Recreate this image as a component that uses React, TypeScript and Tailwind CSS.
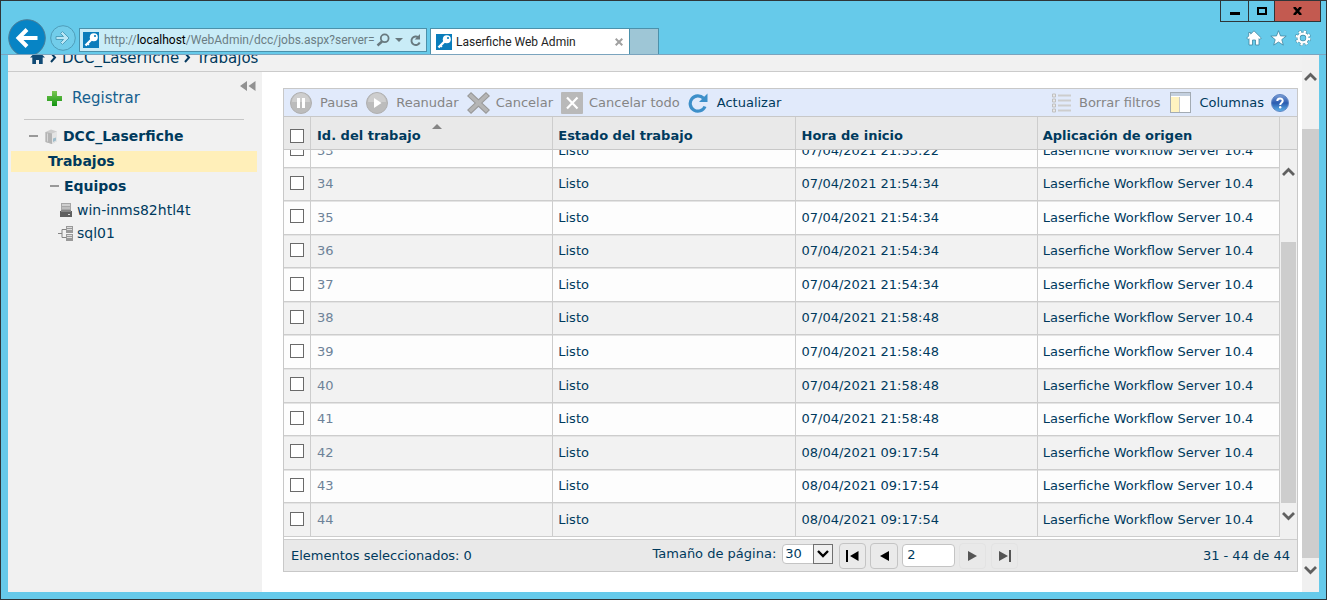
import React from 'react';

const jobs = [
  { id: 33, start: '07/04/2021 21:53:22' },
  { id: 34, start: '07/04/2021 21:54:34' },
  { id: 35, start: '07/04/2021 21:54:34' },
  { id: 36, start: '07/04/2021 21:54:34' },
  { id: 37, start: '07/04/2021 21:54:34' },
  { id: 38, start: '07/04/2021 21:58:48' },
  { id: 39, start: '07/04/2021 21:58:48' },
  { id: 40, start: '07/04/2021 21:58:48' },
  { id: 41, start: '07/04/2021 21:58:48' },
  { id: 42, start: '08/04/2021 09:17:54' },
  { id: 43, start: '08/04/2021 09:17:54' },
  { id: 44, start: '08/04/2021 09:17:54' },
];

const checkboxClass =
  'block w-[14px] h-[14px] mx-auto appearance-none border border-[#6a6a6a] bg-white checked:bg-[#003a5d]';

const cellClass = 'border-r border-b border-[#cdcdcd] shadow-[inset_0_1px_0_#e4e4e4]';

function KeyIcon() {
  return (
    <svg width="16" height="16" viewBox="0 0 16 16" className="shrink-0">
      <rect width="16" height="16" fill="#0a7dbb" />
      <path d="M9 7L2.500 13.500" stroke="#fff" strokeWidth="2.400" />
      <path d="M4 11l2 2" stroke="#fff" strokeWidth="1.500" />
      <circle cx="10.800" cy="5.200" r="4" fill="#fff" />
      <circle cx="12" cy="4" r="1.100" fill="#0a7dbb" />
    </svg>
  );
}

function ChevronUp() {
  return (
    <svg width="13" height="9" viewBox="0 0 13 9" className="shrink-0">
      <path d="M1 8l5.500-5.500L12 8" fill="none" stroke="#606060" strokeWidth="2.800" />
    </svg>
  );
}

function ChevronDown() {
  return (
    <svg width="13" height="9" viewBox="0 0 13 9" className="shrink-0">
      <path d="M1 1l5.500 5.500L12 1" fill="none" stroke="#606060" strokeWidth="2.800" />
    </svg>
  );
}

function BrowserBar() {
  return (
    <header className="flex items-end h-[54px] shrink-0 pl-[7px] border-b border-[#7ba4be] overflow-hidden font-['Roboto',sans-serif] text-[12px]">
      <button aria-label="Atrás" className="self-start mt-[18px] shrink-0">
        <svg width="38" height="38" viewBox="0 0 38 38" className="block">
          <circle cx="19" cy="19" r="18.300" fill="#0784c5" stroke="#4a7d98" strokeWidth="1" />
          <path d="M12 19h17.500M19 10.500L10.500 19l8.500 8.500" fill="none" stroke="#fff" strokeWidth="4" />
        </svg>
      </button>
      <button aria-label="Adelante" className="self-start mt-6 ml-1 shrink-0">
        <svg width="26" height="26" viewBox="0 0 26 26" className="block">
          <circle cx="13" cy="13" r="12.300" fill="#72cdea" stroke="#4f9db9" />
          <path d="M6 11.500h7.500L10.500 8.500l2-2 6.500 6.500-6.500 6.500-2-2 3-3H6z" fill="#b9e6f5" stroke="#4fa0bd" strokeWidth="1" />
        </svg>
      </button>
      <div className="flex items-center h-6 w-[348px] ml-[3px] mb-[2px] pl-[3px] pr-1 shrink-0 border border-[#4b91ab] bg-[#c9ecf7]">
        <KeyIcon />
        <div className="flex-1 ml-[5px] whitespace-nowrap text-[#6b7d84]">
          http://<span className="text-black">localhost</span>/WebAdmin/dcc/jobs.aspx?server=
        </div>
        <button aria-label="Buscar">
          <svg width="14" height="14" viewBox="0 0 14 14" fill="none" stroke="#68797f" className="block">
            <circle cx="8.700" cy="5.300" r="3.900" strokeWidth="1.800" />
            <path d="M6 8.500L1.500 12.500" strokeWidth="2.400" />
          </svg>
        </button>
        <button aria-label="Mostrar direcciones" className="ml-[5px]">
          <svg width="8" height="4" viewBox="0 0 8 4" className="block">
            <path d="M0 0h8L4 4z" fill="#68797f" />
          </svg>
        </button>
        <button aria-label="Recargar" className="ml-[6px]">
          <svg width="13" height="13" viewBox="0 0 13 13" className="block">
            <path d="M9.500 3.400A4.300 4.300 0 1 0 10.700 8.500" fill="none" stroke="#68797f" strokeWidth="1.900" />
            <path d="M11 0v5.500H5.700z" fill="#68797f" />
          </svg>
        </button>
      </div>
      <div className="flex items-center h-[26px] w-[200px] ml-[3px] pl-[5px] pr-[6px] shrink-0 border border-b-0 border-[#4b91ab] bg-white text-[#222]">
        <KeyIcon />
        <span className="flex-1 ml-1 whitespace-nowrap">Laserfiche Web Admin</span>
        <button aria-label="Cerrar pestaña">
          <svg width="8" height="8" viewBox="0 0 8 8" className="block">
            <path d="M.7.7l6.600 6.600M7.300.7L.7 7.300" stroke="#a0a0a0" strokeWidth="2" />
          </svg>
        </button>
      </div>
      <button aria-label="Nueva pestaña" className="h-[26px] w-[29px] shrink-0 border border-b-0 border-l-0 border-[#4b91ab] bg-[#9ec6d6]" />
      <div className="flex flex-col items-end self-stretch ml-auto">
        <div className="flex h-[21px] mr-[5px] border border-t-0 border-[#2e3538]">
          <button aria-label="Minimizar" className="flex items-center justify-center w-[28px] border-r border-[#2e3538]">
            <span className="w-[10px] h-[3px] mt-1 bg-black" />
          </button>
          <button aria-label="Maximizar" className="flex items-center justify-center w-[26px] border-r border-[#2e3538]">
            <span className="w-[10px] h-2 border-2 border-black" />
          </button>
          <button aria-label="Cerrar" className="flex items-center justify-center w-[45px] bg-[#c35a50]">
            <svg width="9" height="8" viewBox="0 0 9 8">
              <path d="M1 0l7 8M8 0L1 8" stroke="#000" strokeWidth="2.600" />
            </svg>
          </button>
        </div>
        <div className="flex gap-2 mt-2 mr-[15px]">
          <button aria-label="Inicio">
            <svg width="16" height="16" viewBox="0 0 16 16" className="block">
              <path d="M8 .8L15.300 8l-1.500 1.500-.8-.8V15H9.500v-5h-3v5H3V8.700l-.8.800L.7 8l2-2V2.500h2V4z" fill="#fff" stroke="#3f87a1" strokeWidth=".8" />
            </svg>
          </button>
          <button aria-label="Favoritos">
            <svg width="17" height="16" viewBox="0 0 17 16" className="block">
              <path d="M8.500.7l2 5.200 5.700.2-4.400 3.500 1.500 5.500-4.800-3.100-4.800 3.100 1.500-5.500L.8 6.100l5.700-.2z" fill="#fff" stroke="#3f87a1" strokeWidth=".8" />
            </svg>
          </button>
          <button aria-label="Herramientas">
            <svg width="16" height="16" viewBox="0 0 16 16" fill="none" className="block">
              <circle cx="8" cy="8" r="6.300" stroke="#3f87a1" strokeWidth="3.400" strokeDasharray="2.700 2.248" />
              <circle cx="8" cy="8" r="4.400" stroke="#3f87a1" strokeWidth="3.600" />
              <circle cx="8" cy="8" r="6.300" stroke="#fff" strokeWidth="2.400" strokeDasharray="2.300 2.648" />
              <circle cx="8" cy="8" r="4.400" stroke="#fff" strokeWidth="2.400" />
            </svg>
          </button>
        </div>
      </div>
    </header>
  );
}

function Breadcrumb() {
  return (
    <nav className="flex items-end h-[17px] shrink-0 pl-[22px] pb-[3px] overflow-hidden border-b border-[#cbcbcb] bg-[#f1f1f1] text-[15px] leading-[20px]">
      <a href="#inicio" aria-label="Inicio" className="mb-1">
        <svg width="15" height="14" viewBox="0 0 15 14" className="block">
          <path d="M7.500 0L15 7.500h-2.300V14H9v-4H6v4H2.300V7.500H0z" fill="#104a75" />
        </svg>
      </a>
      <svg width="7" height="11" viewBox="0 0 7 11" className="mx-[5px] mb-[5px]">
        <path d="M1 1l4 4.500L1 10" fill="none" stroke="#063a60" strokeWidth="2" />
      </svg>
      <a href="#dcc">DCC_Laserfiche</a>
      <svg width="7" height="11" viewBox="0 0 7 11" className="mx-[5px] mb-[5px]">
        <path d="M1 1l4 4.500L1 10" fill="none" stroke="#063a60" strokeWidth="2" />
      </svg>
      <a href="#trabajos">Trabajos</a>
    </nav>
  );
}

function Sidebar() {
  return (
    <aside className="w-[254px] shrink-0 bg-[#f1f1f1] text-[14px]">
      <div className="flex items-start justify-between pl-[39px] pr-[6px] pt-[9px]">
        <a href="#registrar" className="flex items-center gap-[10px] mt-1 text-[15px] leading-[26px] text-[#17608f]">
          <svg width="15" height="15" viewBox="0 0 15 15">
            <defs>
              <linearGradient id="plus" x1="0" y1="0" x2="0" y2="1">
                <stop offset="0" stopColor="#7cc653" />
                <stop offset="1" stopColor="#129512" />
              </linearGradient>
            </defs>
            <path d="M5 0h5v5h5v5h-5v5H5v-5H0V5h5z" fill="url(#plus)" />
          </svg>
          Registrar
        </a>
        <button aria-label="Contraer panel">
          <svg width="16" height="10" viewBox="0 0 16 10" className="block">
            <path d="M7 0v10L0 5zM15.500 0v10l-7-5z" fill="#919191" />
          </svg>
        </button>
      </div>
      <hr className="ml-4 mr-[18px] mt-2 border-[#c6c6c6]" />
      <ul className="mt-1 pl-[3px] pr-[5px]">
        <li className="flex items-center h-6 pl-[18px] font-bold">
          <button aria-label="Contraer DCC_Laserfiche" className="w-[9px] h-[2px] bg-[#999]" />
          <svg width="13" height="15" viewBox="0 0 13 15" className="ml-[7px] mr-[5px]">
            <path d="M.5 3L6 .5l6 2V12l-5 3-6.500-2z" fill="#cdcdcd" />
            <path d="M.5 3L7 4.500V15L.5 13z" fill="#b4b4b4" />
            <path d="M2.500 4.500v8" stroke="#d8d8d8" />
            <path d="M7 4.500l5-2V12l-5 3z" fill="#e4e4e4" />
            <path d="M8 9.500l3-1v3l-3 1.500z" fill="#9dbccb" />
          </svg>
          <a href="#dcc">DCC_Laserfiche</a>
        </li>
        <li className="flex items-center h-[21px] mt-[3px] pl-[37px] bg-[#ffefb9] font-bold">
          <a href="#trabajos">Trabajos</a>
        </li>
        <li className="flex items-center h-6 mt-[2px] pl-[39px] font-bold">
          <button aria-label="Contraer Equipos" className="w-[9px] h-[2px] mr-[5px] bg-[#999]" />
          <a href="#equipos">Equipos</a>
        </li>
        <li className="flex items-center h-6 pl-[49px]">
          <svg width="12" height="14" viewBox="0 0 12 14" className="mr-[5px]">
            <path d="M1 0h10v7H1z" fill="#a6a6a6" />
            <path d="M2 1h8v2H2z" fill="#cfcfcf" />
            <path d="M2 4h8v2H2z" fill="#bdbdbd" />
            <path d="M0 8h12v6H0z" fill="#5f5f5f" />
            <path d="M1 7h10v2H1z" fill="#858585" />
            <path d="M8 11h2v1H8z" fill="#ddd" />
          </svg>
          <a href="#win">win-inms82htl4t</a>
        </li>
        <li className="flex items-center h-[22px] pl-[47px]">
          <svg width="15" height="15" viewBox="0 0 15 15" className="mr-1">
            <path d="M0 7.500h4M8 3.500H4v8h4" fill="none" stroke="#858585" />
            <path d="M8 0h7v7H8zM8 8h7v7H8z" fill="#999" />
            <path d="M9 1h5v1H9zM9 3h5v1H9zM9 9h5v1H9zM9 11h5v1H9z" fill="#ddd" />
          </svg>
          <a href="#sql">sql01</a>
        </li>
      </ul>
    </aside>
  );
}

function Toolbar() {
  return (
    <div className="flex items-center h-7 pl-[6px] pr-2 border-b border-[#c8c8c8] bg-[#e1eafb] text-[#858585] whitespace-nowrap">
      <button className="flex items-center gap-2">
        <svg width="22" height="22" viewBox="0 0 22 22">
          <circle cx="11" cy="11" r="10.500" fill="#bcbcbc" stroke="#b0b0b0" />
          <path d="M2 10a9 9 0 0 1 18 0z" fill="#cecece" />
          <path d="M7 6h3v10H7zM12 6h3v10h-3z" fill="#fff" />
        </svg>
        Pausa
      </button>
      <button className="flex items-center gap-2 ml-2">
        <svg width="22" height="22" viewBox="0 0 22 22">
          <circle cx="11" cy="11" r="10.500" fill="#bcbcbc" stroke="#b0b0b0" />
          <path d="M2 10a9 9 0 0 1 18 0z" fill="#cecece" />
          <path d="M8 6l7.500 5L8 16z" fill="#fff" />
        </svg>
        Reanudar
      </button>
      <button className="flex items-center gap-[6px] ml-2">
        <svg width="23" height="22" viewBox="0 0 23 22">
          <path d="M4 0l7.500 7L19 0l4 4-7.500 7 7.500 7-4 4-7.500-7L4 22l-4-4 7.500-7L0 4z" fill="#999" />
          <path d="M4 1.500l7.500 7 7.500-7L21.500 4 14 11l7.500 7-2.500 2.500-7.500-7-7.500 7L1.500 18 9 11 1.500 4z" fill="#b5b5b5" />
        </svg>
        Cancelar
      </button>
      <button className="flex items-center gap-[6px] ml-2">
        <svg width="22" height="22" viewBox="0 0 22 22">
          <rect width="22" height="22" rx="1" fill="#b9b9b9" />
          <path d="M6 5.500l10.500 11M16.500 5.500L6 16.500" stroke="#fff" strokeWidth="2.200" />
        </svg>
        Cancelar todo
      </button>
      <button className="flex items-center gap-2 ml-2 text-[#003a5d]">
        <svg width="21" height="20" viewBox="0 0 21 20">
          <path d="M15.500 5.200A7.700 7.700 0 1 0 17 13.500" fill="none" stroke="#3d8fc9" strokeWidth="3.200" />
          <path d="M19.500.5V9H11z" fill="#3d8fc9" />
        </svg>
        Actualizar
      </button>
      <button className="flex items-center gap-2 ml-auto">
        <svg width="19" height="20" viewBox="0 0 19 20">
          <path d="M6 2.500h13M6 7.500h13M6 12.500h13M6 17.500h13" stroke="#cdcdcd" strokeWidth="2" />
          <path d="M.5 1h3v3h-3zM.5 6h3v3h-3zM.5 11h3v3h-3zM.5 16h3v3h-3z" fill="#e8e8e8" stroke="#c0c0c0" />
        </svg>
        Borrar filtros
      </button>
      <button className="flex items-center gap-2 ml-[10px] text-[#003a5d]">
        <svg width="21" height="21" viewBox="0 0 21 21">
          <rect x=".5" y=".5" width="20" height="20" fill="#fff" stroke="#a3abb3" />
          <path d="M1 1h19v3H1z" fill="#c4d0df" />
          <path d="M1 5h8v15H1z" fill="#fff3c0" />
          <path d="M9.500 5v15" stroke="#c9c9c9" />
        </svg>
        Columnas
      </button>
      <button aria-label="Ayuda" className="ml-[7px]">
        <svg width="18" height="18" viewBox="0 0 18 18" className="block">
          <defs>
            <linearGradient id="help" x1="0" y1="0" x2="0" y2="1">
              <stop offset="0" stopColor="#7e9fd6" />
              <stop offset=".5" stopColor="#2a5cb0" />
              <stop offset="1" stopColor="#5eb4ea" />
            </linearGradient>
          </defs>
          <circle cx="9" cy="9" r="8.500" fill="url(#help)" stroke="#5f86c4" />
          <path d="M6.300 7C6.300 3.500 11.700 3.600 11.700 6.800c0 2-2.500 2-2.500 4.200" fill="none" stroke="#fff" strokeWidth="2" />
          <circle cx="9.200" cy="13.300" r="1.200" fill="#fff" />
        </svg>
      </button>
    </div>
  );
}

function Columns() {
  return (
    <colgroup>
      <col className="w-[27px]" />
      <col />
      <col />
      <col />
      <col />
    </colgroup>
  );
}

function JobsGrid() {
  return (
    <div>
      <div className="flex h-[33px] border-b border-[#c8c8c8] bg-[#e9e9e9]">
        <table className="flex-1 table-fixed border-separate border-spacing-0 w-full text-left">
          <Columns />
          <thead>
            <tr className="h-8">
              <th className="border-r border-[#cdcdcd] pt-[5px]">
                <input type="checkbox" aria-label="Seleccionar todo" className={checkboxClass} />
              </th>
              <th className="relative border-r border-[#cdcdcd] pl-[6px] pt-[5px]">
                Id. del trabajo
                <svg width="10" height="5" viewBox="0 0 10 5" className="absolute left-[121px] top-[7px]">
                  <path d="M5 0l5 5H0z" fill="#858585" />
                </svg>
              </th>
              <th className="border-r border-[#cdcdcd] pl-[5px] pt-[5px]">Estado del trabajo</th>
              <th className="border-r border-[#cdcdcd] pl-[6px] pt-[5px]">Hora de inicio</th>
              <th className="border-r border-[#cdcdcd] pl-[5px] pt-[5px]">Aplicación de origen</th>
            </tr>
          </thead>
        </table>
        <div className="w-[17px] shrink-0" />
      </div>
      <div className="flex h-[389px]">
        <div className="flex-1 flex flex-col justify-end overflow-hidden pb-[2px]">
          <table className="table-fixed border-separate border-spacing-0 w-full h-[403px] shrink-0">
            <Columns />
            <tbody>
              {jobs.map(job => (
                <tr key={job.id} className="bg-[#fdfdfd] even:bg-[#f2f2f2]">
                  <td className={`${cellClass} pb-[2px]`}>
                    <input type="checkbox" aria-label={`Seleccionar ${job.id}`} className={checkboxClass} />
                  </td>
                  <td className={`${cellClass} pl-[6px] text-[#6d8298]`}>{job.id}</td>
                  <td className={`${cellClass} pl-[5px]`}>Listo</td>
                  <td className={`${cellClass} pl-[6px]`}>{job.start}</td>
                  <td className={`${cellClass} pl-[5px] whitespace-nowrap`}>Laserfiche Workflow Server 10.4</td>
                </tr>
              ))}
            </tbody>
          </table>
        </div>
        <div className="flex flex-col items-center w-[17px] shrink-0 pt-[17px] pb-[18px] bg-[#f0f0f0]">
          <ChevronUp />
          <div className="w-[15px] h-[261px] mt-[66px] mb-auto bg-[#cdcdcd]" />
          <ChevronDown />
        </div>
      </div>
    </div>
  );
}

function Pager() {
  return (
    <footer className="flex items-center justify-between h-8 pl-[7px] pr-[7px] border-t border-[#cdcdcd] bg-[#e9e9e9] whitespace-nowrap">
      <span>Elementos seleccionados: 0</span>
      <div className="flex items-center mr-1">
        <label htmlFor="page-size" className="pb-1">Tamaño de página:</label>
        <div className="relative ml-[6px] mb-1">
          <select
            id="page-size"
            defaultValue="30"
            className="block w-[51px] h-5 pl-[2px] appearance-none rounded-sm border border-[#c4c4c4] bg-white leading-[18px]"
          >
            <option>10</option>
            <option>30</option>
            <option>50</option>
          </select>
          <span className="absolute right-0 top-0 flex items-center justify-center w-5 h-5 border border-[#707070] bg-[#f0f0f0] pointer-events-none">
            <svg width="12" height="8" viewBox="0 0 12 8">
              <path d="M1 1l5 5 5-5" fill="none" stroke="#000" strokeWidth="2.400" />
            </svg>
          </span>
        </div>
        <button aria-label="Primera página" className="flex items-center justify-center w-[27px] h-[26px] ml-[6px] rounded-sm border border-[#c4c4c4] bg-[#eaeaea]">
          <svg width="13" height="12" viewBox="0 0 13 12">
            <path d="M0 0h2v12H0zM12.500 1v10L4 6z" />
          </svg>
        </button>
        <button aria-label="Página anterior" className="flex items-center justify-center w-[28px] h-[26px] ml-1 rounded-sm border border-[#c4c4c4] bg-[#eaeaea]">
          <svg width="9" height="10" viewBox="0 0 9 10">
            <path d="M9 0v10L0 5z" />
          </svg>
        </button>
        <input
          aria-label="Página"
          defaultValue="2"
          className="w-[53px] h-[23px] ml-1 pl-1 pb-[3px] rounded border border-[#c4c4c4] bg-white"
        />
        <button aria-label="Página siguiente" disabled className="flex items-center justify-center w-[27px] h-[26px] ml-1 rounded-sm border border-[#e3e3e3]">
          <svg width="9" height="10" viewBox="0 0 9 10">
            <path d="M0 0v10l9-5z" fill="#555" />
          </svg>
        </button>
        <button aria-label="Última página" disabled className="flex items-center justify-center w-[27px] h-[26px] ml-[5px] rounded-sm border border-[#e3e3e3]">
          <svg width="12" height="12" viewBox="0 0 12 12">
            <path d="M10 0h2v12h-2zM0 1v10l9-5z" fill="#555" />
          </svg>
        </button>
      </div>
      <span>31 - 44 de 44</span>
    </footer>
  );
}

export default function App() {
  return (
    <div className="flex flex-col min-h-screen border border-[#2e3538] bg-[#66caea] text-[#003a5d] text-[13px] font-['Verdana','DejaVu_Sans',sans-serif]">
      <BrowserBar />
      <div className="flex flex-1 mx-[7px] mb-[7px] bg-white">
        <div className="flex flex-col flex-1 min-w-0">
          <Breadcrumb />
          <div className="flex flex-1">
            <Sidebar />
            <main className="flex-1 min-w-0 pt-4 pl-[21px] pr-1 pb-5">
              <div className="border border-[#c8c8c8]">
                <Toolbar />
                <JobsGrid />
                <Pager />
              </div>
            </main>
          </div>
        </div>
        <div className="flex flex-col items-center w-[17px] shrink-0 pt-[17px] pb-[17px] bg-[#f0f0f0]">
          <ChevronUp />
          <div className="w-full flex-1 mt-12 mb-2 bg-[#cdcdcd]" />
          <ChevronDown />
        </div>
      </div>
    </div>
  );
}
